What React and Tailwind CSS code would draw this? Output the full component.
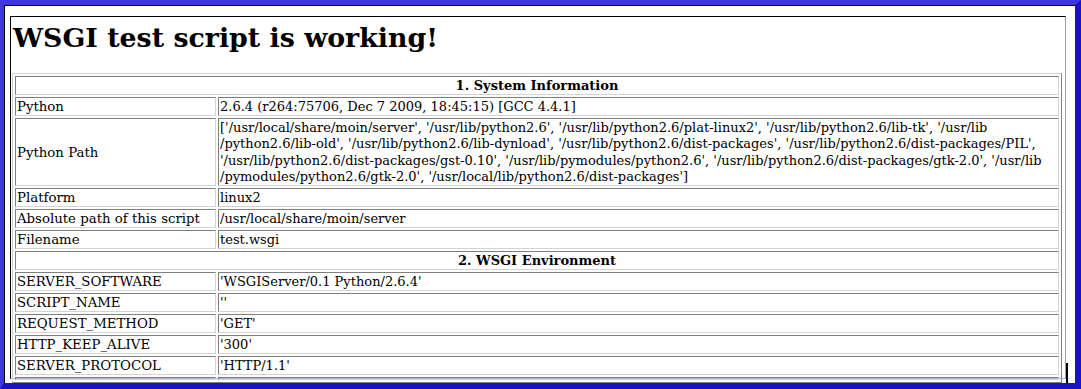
import React from "react";

const serif = { fontFamily: '"DejaVu Serif", serif' };

const systemInfo = [
  ["Python", "2.6.4 (r264:75706, Dec 7 2009, 18:45:15) [GCC 4.4.1]"],
  [
    "Python Path",
    [
      "['/usr/local/share/moin/server', '/usr/lib/python2.6', '/usr/lib/python2.6/plat-linux2', '/usr/lib/python2.6/lib-tk', '/usr/lib",
      "/python2.6/lib-old', '/usr/lib/python2.6/lib-dynload', '/usr/lib/python2.6/dist-packages', '/usr/lib/python2.6/dist-packages/PIL',",
      "'/usr/lib/python2.6/dist-packages/gst-0.10', '/usr/lib/pymodules/python2.6', '/usr/lib/python2.6/dist-packages/gtk-2.0', '/usr/lib",
      "/pymodules/python2.6/gtk-2.0', '/usr/local/lib/python2.6/dist-packages']",
    ],
  ],
  ["Platform", "linux2"],
  ["Absolute path of this script", "/usr/local/share/moin/server"],
  ["Filename", "test.wsgi"],
];

const wsgiEnv = [
  ["SERVER_SOFTWARE", "'WSGIServer/0.1 Python/2.6.4'"],
  ["SCRIPT_NAME", "''"],
  ["REQUEST_METHOD", "'GET'"],
  ["HTTP_KEEP_ALIVE", "'300'"],
  ["SERVER_PROTOCOL", "'HTTP/1.1'"],
  ["", ""],
];

// inset cell border, like an old table border=1
const cell =
  "border border-t-[#7f7f7f] border-l-[#7f7f7f] border-r-[#d3d3d3] border-b-[#d3d3d3] px-px pt-px pb-0 align-middle overflow-hidden";

const Header = ({ children }) => (
  <tr>
    <th colSpan={2} className={`${cell} text-center font-bold text-[13px]`}>
      {children}
    </th>
  </tr>
);

const Row = ({ label, value }) => (
  <tr>
    <td className={`${cell} text-[13.3px]`}>{label}</td>
    <td className={`${cell} text-[13px]`}>
      {Array.isArray(value)
        ? value.map((line, i) => (
            <span key={i} className="block whitespace-nowrap leading-[16.3px]">
              {line}
            </span>
          ))
        : value}
    </td>
  </tr>
);

export default function App() {
  return (
    <div className="w-[1081px] h-[389px] overflow-hidden bg-white" style={serif}>
      {/* blue outset frame */}
      <div className="relative h-full border-t-[5px] border-l-[4px] border-r-[6px] border-b-[6px] border-t-[#3f37de] border-l-[#3f37de] border-r-[#1b11c6] border-b-[#1b11c6] overflow-hidden">
        <div className="h-full border-t border-l border-black bg-white pt-[10px] pl-[5px] pr-[9px]">
          {/* inner page box */}
          <div className="h-[363px] border-t border-l border-black border-r border-r-[#a0a0a0] border-b border-b-[#b8b8b8] pl-px">
            <h1 className="ml-px mt-[5px] text-[26.8px] leading-[31px] font-bold text-black">
              WSGI test script is working!
            </h1>
            <table className="mt-[20px] w-[1050px] table-fixed border-separate border-spacing-[2px] border border-t-[#d3d3d3] border-l-[#d3d3d3] border-r-[#7f7f7f] border-b-[#7f7f7f] leading-[16px] text-black">
              <colgroup>
                <col className="w-[201px]" />
                <col />
              </colgroup>
              <tbody>
                <Header>1. System Information</Header>
                {systemInfo.map(([l, v]) => (
                  <Row key={l} label={l} value={v} />
                ))}
                <Header>2. WSGI Environment</Header>
                {wsgiEnv.map(([l, v], i) => (
                  <Row key={i} label={l} value={v} />
                ))}
              </tbody>
            </table>
          </div>
        </div>
        <div className="absolute left-[1062px] top-[358px] w-[2px] h-[22px] bg-black" />
      </div>
    </div>
  );
}
